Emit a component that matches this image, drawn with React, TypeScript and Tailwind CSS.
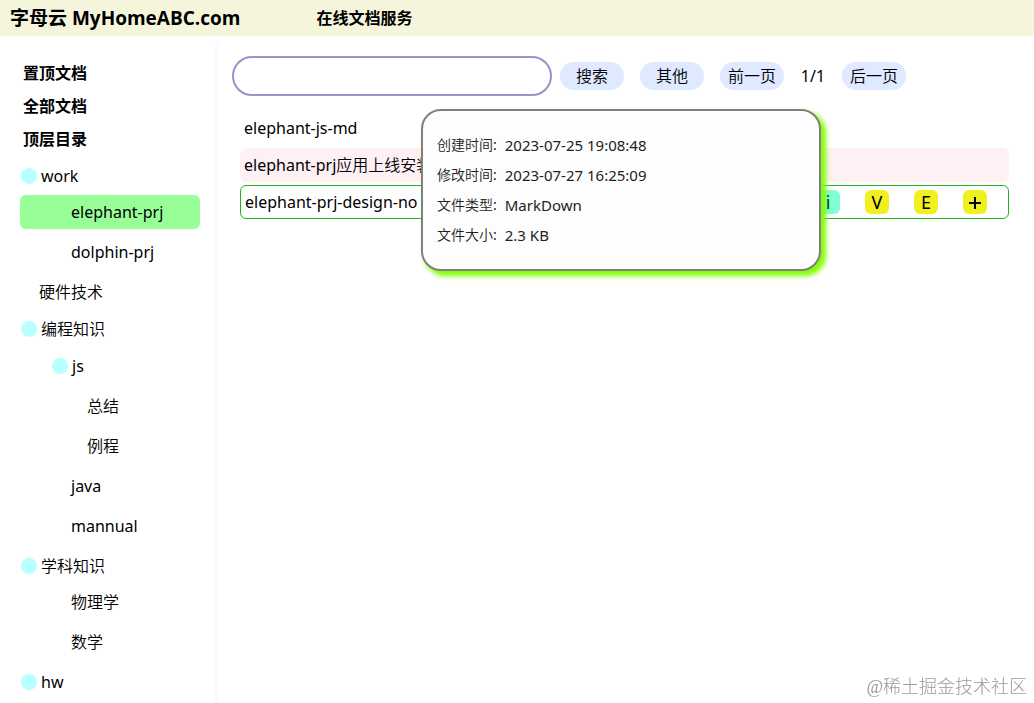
import { useState } from "react";

type TreeNode = { name: string; children?: TreeNode[] };

const tree: TreeNode[] = [
  { name: "work", children: [{ name: "elephant-prj" }, { name: "dolphin-prj" }] },
  { name: "硬件技术" },
  {
    name: "编程知识",
    children: [
      { name: "js", children: [{ name: "总结" }, { name: "例程" }] },
      { name: "java" },
      { name: "mannual" },
    ],
  },
  { name: "学科知识", children: [{ name: "物理学" }, { name: "数学" }] },
  { name: "hw", children: [] },
];

const leafIndent = ["pl-[19px]", "pl-[51px]", "pl-[67px]"];
const leafMargin = ["mt-[3px]", "my-[3px]", "my-[3px]"];
const folderStyle = ["mt-1 pl-px", "mt-[5px] mb-1 pl-8"];

const details = [
  ["创建时间:", "2023-07-25 19:08:48"],
  ["修改时间:", "2023-07-27 16:25:09"],
  ["文件类型:", "MarkDown"],
  ["文件大小:", "2.3 KB"],
];

const pill = "h-7 w-16 rounded-full bg-[#dfe9ff] text-center leading-7";
const action = "h-6 w-6 rounded-md text-center text-lg leading-6";

function Branch({ nodes, level, selected, onSelect }: {
  nodes: TreeNode[];
  level: number;
  selected: string;
  onSelect: (name: string) => void;
}) {
  return (
    <ul className="flex flex-col">
      {nodes.map((node) =>
        node.children ? (
          <li key={node.name}>
            <button className={`flex h-8 w-full items-center gap-1 text-left ${folderStyle[level]}`}>
              <span className="size-4 rounded-full bg-[#b8ffff]" />
              {node.name}
            </button>
            <Branch nodes={node.children} level={level + 1} selected={selected} onSelect={onSelect} />
          </li>
        ) : (
          <li key={node.name} className={leafMargin[level]}>
            <button
              onClick={() => onSelect(node.name)}
              className={`h-[34px] w-full rounded-md text-left ${leafIndent[level]} ${
                node.name === selected ? "bg-[#98ff98]" : ""
              }`}
            >
              {node.name}
            </button>
          </li>
        ),
      )}
    </ul>
  );
}

export default function App() {
  const [selected, setSelected] = useState("elephant-prj");
  return (
    <div className="flex h-screen flex-col overflow-hidden bg-white font-['Noto_Sans','Noto_Sans_CJK_SC_DemiLight','Noto_Sans_CJK_SC',sans-serif] text-base text-black">
      <header className="flex h-9 shrink-0 items-center gap-[76px] bg-[#f5f5dc] pl-[10px] font-['Open_Sans','Noto_Sans_CJK_SC',sans-serif] font-bold">
        <h1 className="text-[19px] leading-9">字母云 MyHomeABC.com</h1>
        <p>在线文档服务</p>
      </header>
      <div className="flex min-h-0 grow pt-2">
        <nav className="w-[218px] shrink-0 border-r-3 border-[#f8faff] pt-[13px] pr-[15px] pl-5">
          <ul className="pl-[3px] font-['Open_Sans','Noto_Sans_CJK_SC',sans-serif] font-bold leading-[33px]">
            <li><a href="#top">置顶文档</a></li>
            <li><a href="#all">全部文档</a></li>
            <li><a href="#root">顶层目录</a></li>
          </ul>
          <Branch nodes={tree} level={0} selected={selected} onSelect={setSelected} />
        </nav>
        <main className="min-w-0 grow pt-3 pr-[25px] pl-[14px]">
          <form className="flex items-center gap-4" onSubmit={(e) => e.preventDefault()}>
            <div className="flex items-center gap-2">
              <input
                aria-label="搜索"
                className="h-10 w-80 rounded-full border-2 border-[#9d91c9] px-4 outline-none"
              />
              <button className={pill}>搜索</button>
            </div>
            <button type="button" className={pill}>其他</button>
            <button type="button" className={pill}>前一页</button>
            <span className="w-[26px] text-center">1/1</span>
            <button type="button" className={pill}>后一页</button>
          </form>
          <ul className="mt-[15px] flex flex-col gap-[3px] pl-2 leading-[34px]">
            <li className="h-[34px] px-1"><a href="#js-md">elephant-js-md</a></li>
            <li className="h-[34px] rounded-md bg-[#fff0f4] px-1">
              <a href="#deploy">elephant-prj应用上线安装</a>
            </li>
            <li className="relative flex h-[34px] items-center justify-between rounded-md border border-[#22b422] pr-[21px] pl-1">
              <a href="#design">elephant-prj-design-no</a>
              <div className="flex gap-[25px]">
                <button className={`${action} bg-[#7fffd4]`}>i</button>
                <button className={`${action} bg-[#f0f020]`}>V</button>
                <button className={`${action} bg-[#f0f020]`}>E</button>
                <button aria-label="+" className={`${action} flex items-center justify-center bg-[#f0f020] pt-0.5`}>
                  <svg viewBox="0 0 14 14" className="size-[14px]" stroke="black" strokeWidth="2">
                    <path d="M7 1v12M1 7h12" />
                  </svg>
                </button>
              </div>
              <dl className="absolute -top-[77px] right-[187px] grid w-[400px] grid-cols-[auto_1fr] gap-x-2 rounded-[20px] border-2 border-[#808080] bg-[#fdfdfd] px-[14px] py-[19px] text-[#222] shadow-[4px_4px_5px_1px_#7fff00]">
                {details.map(([label, value]) => (
                  <div key={label} className="contents">
                    <dt className="text-sm leading-[30px]">{label}</dt>
                    <dd className="text-[15px] leading-[30px]">{value}</dd>
                  </div>
                ))}
              </dl>
            </li>
          </ul>
        </main>
      </div>
      <p className="fixed right-[7px] bottom-1 font-['Liberation_Serif','Noto_Sans_CJK_SC',serif] text-lg leading-6 font-light text-[#999]">@稀土掘金技术社区</p>
    </div>
  );
}
